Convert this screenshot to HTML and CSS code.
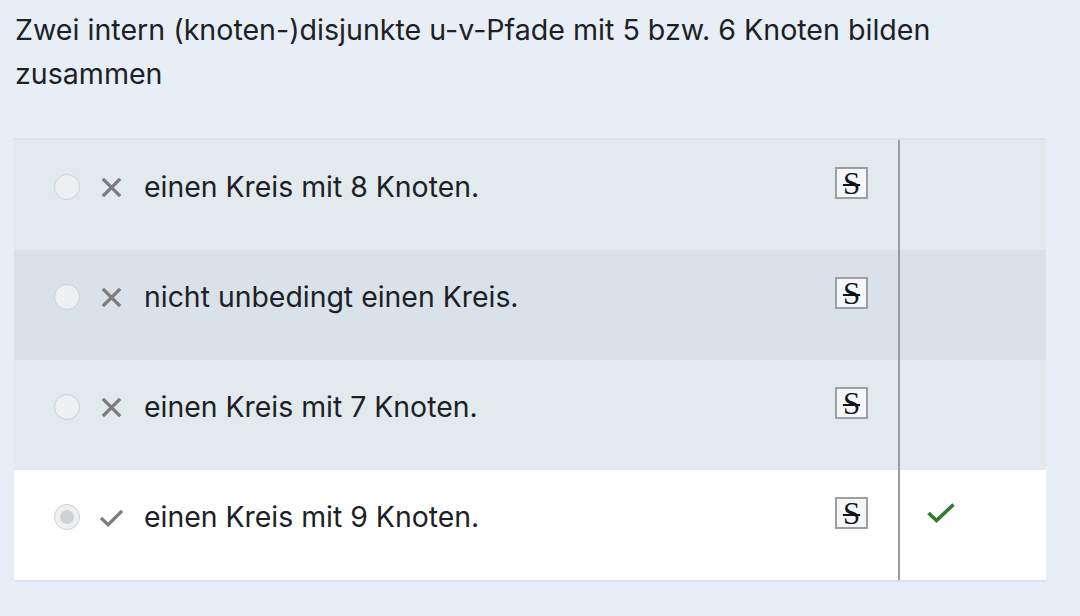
FILE: index.html
```html
<!DOCTYPE html>
<html lang="de">
<head>
<meta charset="utf-8">
<link rel="stylesheet" href="styles.css">
</head>
<body>
<div class="page">
  <p class="question">Zwei intern (knoten-)disjunkte u-v-Pfade mit 5 bzw. 6 Knoten bilden zusammen</p>
  <div class="answers">
    <div class="row odd">
      <div class="main">
        <span class="radio"></span>
        <svg class="mark" viewBox="0 0 24 24"><path d="M3 3L21 21M21 3L3 21" stroke="#7d7d7d" stroke-width="3.6" fill="none"/></svg>
        <span class="label">einen Kreis mit 8 Knoten.</span>
        <span class="strike">S</span>
      </div>
      <div class="side"></div>
    </div>
    <div class="row even">
      <div class="main">
        <span class="radio"></span>
        <svg class="mark" viewBox="0 0 24 24"><path d="M3 3L21 21M21 3L3 21" stroke="#7d7d7d" stroke-width="3.6" fill="none"/></svg>
        <span class="label">nicht unbedingt einen Kreis.</span>
        <span class="strike">S</span>
      </div>
      <div class="side"></div>
    </div>
    <div class="row odd">
      <div class="main">
        <span class="radio"></span>
        <svg class="mark" viewBox="0 0 24 24"><path d="M3 3L21 21M21 3L3 21" stroke="#7d7d7d" stroke-width="3.6" fill="none"/></svg>
        <span class="label">einen Kreis mit 7 Knoten.</span>
        <span class="strike">S</span>
      </div>
      <div class="side"></div>
    </div>
    <div class="row selected">
      <div class="main">
        <span class="radio checked"></span>
        <svg class="mark" viewBox="0 0 24 24"><path d="M1 12.5L8.5 19.5L23 5" stroke="#7d7d7d" stroke-width="3.4" fill="none"/></svg>
        <span class="label">einen Kreis mit 9 Knoten.</span>
        <span class="strike">S</span>
      </div>
      <div class="side">
        <svg class="ok" viewBox="0 0 28 20"><path d="M1.5 10L9.5 17.5L26.5 1.5" stroke="#2f7d32" stroke-width="3.6" fill="none"/></svg>
      </div>
    </div>
  </div>
</div>
</body>
</html>
```

FILE: styles.css
```css
html, body {
  margin: 0;
  padding: 0;
  background: #e7eef5;
}
body {
  font-family: Inter, "Noto Sans", sans-serif;
  color: #1d2125;
  width: 1080px;
  height: 616px;
  overflow: hidden;
}
.page {
  padding: 8px 34px 0 14px;
}
.question {
  margin: 0;
  font-size: 28.6px;
  line-height: 44px;
  padding-left: 1px;
  width: 960px;
}
.answers {
  margin-top: 42px;
  border-top: 2px solid #dbe2e9;
  border-bottom: 2px solid #dbe2e9;
}
.row {
  display: flex;
  height: 110px;
}
.odd { background: #e2eaee; }
.even { background: #dae2e9; }
.selected { background: #ffffff; }
.main {
  flex: 0 0 886px;
  display: flex;
  align-items: flex-start;
  padding-top: 27px;
  padding-left: 40px;
  box-sizing: border-box;
  border-right: 2px solid #9a9d9f;
  height: 100%;
}
.radio {
  flex: 0 0 auto;
  width: 24px;
  height: 24px;
  border-radius: 50%;
  border: 1.5px solid #cdd0d3;
  background: #eef0f2;
  margin-top: 7px;
  position: relative;
}
.radio.checked::after {
  content: "";
  position: absolute;
  left: 5px;
  top: 5px;
  width: 14px;
  height: 14px;
  border-radius: 50%;
  background: #cfd1d3;
}
.mark {
  flex: 0 0 auto;
  width: 23px;
  height: 23px;
  margin-left: 20px;
  margin-top: 9px;
}
.label {
  margin-left: 21px;
  font-size: 28.4px;
  line-height: 40px;
  flex: 1;
}
.strike {
  flex: 0 0 auto;
  width: 29px;
  height: 28px;
  border: 2px solid #9d9fa1;
  background: #f4f6f8;
  font-family: "Liberation Serif", serif;
  font-size: 31px;
  line-height: 29px;
  text-align: center;
  text-decoration: line-through;
  text-decoration-thickness: 1.5px;
  color: #101418;
  margin-right: 30px;
}
.side {
  flex: 1;
  padding-top: 33px;
  padding-left: 27px;
}
.ok {
  display: block;
  width: 28px;
  height: 20px;
}
```
